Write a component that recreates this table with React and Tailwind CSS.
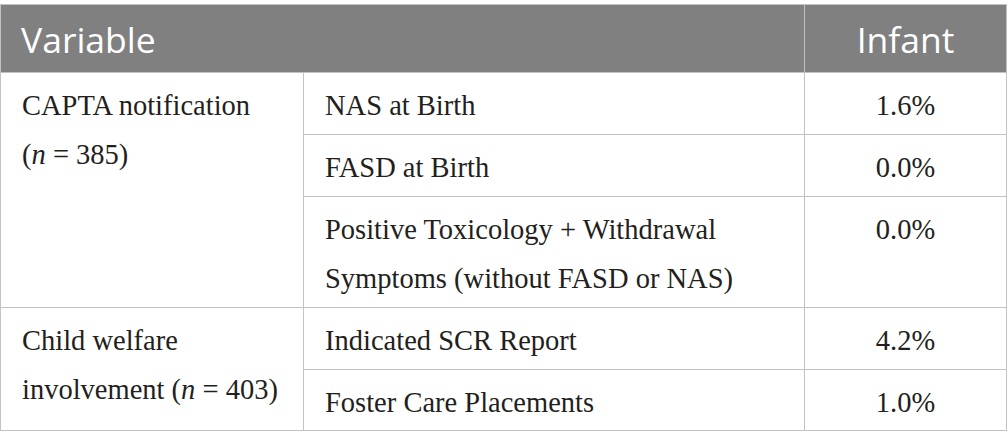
import React from "react";

const serif = { fontFamily: '"Liberation Serif", "Times New Roman", serif' };

function Cell({ children, className = "", ...rest }) {
  return (
    <td
      {...rest}
      className={
        "border border-[#c2c2c2] align-top pt-[8px] pb-[4px] leading-[49px] text-[28.5px] text-[#231f20] " +
        className
      }
    >
      {children}
    </td>
  );
}

export default function App() {
  return (
    <div className="w-[1007px] h-[448px] bg-white pt-[4px]">
      <table className="w-[1006px] border-collapse table-fixed" style={serif}>
        <colgroup>
          <col className="w-[303px]" />
          <col className="w-[501px]" />
          <col className="w-[202px]" />
        </colgroup>
        <thead>
          <tr className="bg-[#808080] text-white">
            <th
              colSpan={2}
              className="border border-[#c2c2c2] h-[68px] text-left pl-[20px] pt-[1px] font-normal text-[35.5px] leading-[40px]"
              style={{ fontFamily: '"Open Sans", "Noto Sans", sans-serif' }}
            >
              Variable
            </th>
            <th
              className="border border-[#c2c2c2] h-[68px] text-center pt-[1px] font-normal text-[35.5px] leading-[40px]"
              style={{ fontFamily: '"Open Sans", "Noto Sans", sans-serif' }}
            >
              Infant
            </th>
          </tr>
        </thead>
        <tbody>
          <tr>
            <Cell rowSpan={3} className="pl-[21px] whitespace-nowrap">
              CAPTA notification
              <br />(<i>n</i> = 385)
            </Cell>
            <Cell className="pl-[21px]">NAS at Birth</Cell>
            <Cell className="text-center">1.6%</Cell>
          </tr>
          <tr>
            <Cell className="pl-[21px]">FASD at Birth</Cell>
            <Cell className="text-center">0.0%</Cell>
          </tr>
          <tr>
            <Cell className="pl-[21px] whitespace-nowrap">
              Positive Toxicology + Withdrawal
              <br />
              Symptoms (without FASD or NAS)
            </Cell>
            <Cell className="text-center">0.0%</Cell>
          </tr>
          <tr>
            <Cell rowSpan={2} className="pl-[21px] whitespace-nowrap">
              Child welfare
              <br />
              involvement (<i>n</i> = 403)
            </Cell>
            <Cell className="pl-[21px]">Indicated SCR Report</Cell>
            <Cell className="text-center">4.2%</Cell>
          </tr>
          <tr>
            <Cell className="pl-[21px] !pb-[3px]">Foster Care Placements</Cell>
            <Cell className="text-center !pb-[3px]">1.0%</Cell>
          </tr>
        </tbody>
      </table>
    </div>
  );
}
